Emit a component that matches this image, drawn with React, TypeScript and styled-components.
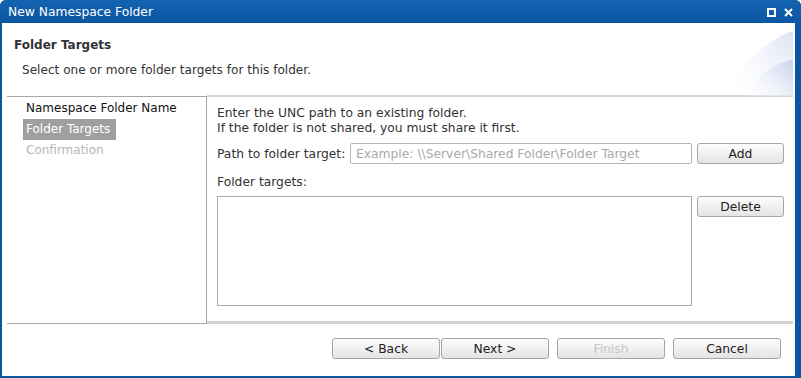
import styled, { createGlobalStyle } from "styled-components";

const GlobalStyle = createGlobalStyle`
    html, body, #root {
        margin: 0;
        padding: 0;
        width: 100%;
        height: 100%;
    }
    body {
        font-family: "DejaVu Sans", Verdana, sans-serif;
        font-size: 12px;
        color: #1e1e1e;
        background: #fff;
    }
`;

interface ButtonProps {
    $disabled?: boolean;
}

function Swoosh() {
    return (
        <SwooshArt width="70" height="72" viewBox="0 0 70 72">
            <defs>
                <linearGradient id="sw1" x1="0" y1="1" x2="1" y2="0">
                    <stop offset="0" stopColor="#ffffff" stopOpacity="0" />
                    <stop offset="1" stopColor="#d9e1f2" />
                </linearGradient>
                <linearGradient id="sw2" x1="0" y1="1" x2="1" y2="0.3">
                    <stop offset="0" stopColor="#ffffff" stopOpacity="0" />
                    <stop offset="1" stopColor="#cfd9ee" />
                </linearGradient>
            </defs>
            <path d="M0 72 C 15 40, 40 15, 70 5 L 70 72 Z" fill="url(#sw1)" />
            <path d="M20 72 C 30 52, 48 38, 70 34 L 70 72 Z" fill="url(#sw2)" />
        </SwooshArt>
    );
}

function App() {
    return (
        <>
            <GlobalStyle />
            <Window>
                <TitleBar>
                    <span>New Namespace Folder</span>
                    <TitleIcons>
                        <svg width="9" height="9" viewBox="0 0 9 9">
                            <rect x="1" y="1" width="7" height="7" fill="none" stroke="#fff" strokeWidth="2" />
                        </svg>
                        <svg width="9" height="9" viewBox="0 0 9 9">
                            <path d="M1 1 L8 8 M8 1 L1 8" stroke="#fff" strokeWidth="2" />
                        </svg>
                    </TitleIcons>
                </TitleBar>
                <Body>
                    <Header>
                        <h3>Folder Targets</h3>
                        <p>Select one or more folder targets for this folder.</p>
                        <Swoosh />
                    </Header>
                    <Main>
                        <Nav>
                            <NavItem>Namespace Folder Name</NavItem>
                            <NavItem $active>Folder Targets</NavItem>
                            <NavItem $muted>Confirmation</NavItem>
                        </Nav>
                        <Content>
                            <Intro>
                                Enter the UNC path to an existing folder.<br />
                                If the folder is not shared, you must share it first.
                            </Intro>
                            <PathRow>
                                <label>Path to folder target:</label>
                                <PathInput placeholder="Example: \\Server\Shared Folder\Folder Target" />
                                <Button>Add</Button>
                            </PathRow>
                            <ListLabel>Folder targets:</ListLabel>
                            <ListRow>
                                <ListBox />
                                <Button>Delete</Button>
                            </ListRow>
                        </Content>
                    </Main>
                    <Footer>
                        <ButtonPair>
                            <WideButton>&lt; Back</WideButton>
                            <WideButton>Next &gt;</WideButton>
                        </ButtonPair>
                        <WideButton $disabled>Finish</WideButton>
                        <WideButton>Cancel</WideButton>
                    </Footer>
                </Body>
            </Window>
        </>
    );
}

const Window = styled.div`
    width: 801px;
    height: 378px;
    box-sizing: border-box;
    display: flex;
    flex-direction: column;
    background: #0b56a2;
    border-radius: 6px 6px 0 0;
    padding: 0 6px 2px 2px;
`;

const TitleBar = styled.div`
    height: 22px;
    flex: none;
    display: flex;
    align-items: center;
    justify-content: space-between;
    padding: 1px 8px 0 8px;
    color: #fff;
    font-size: 12.3px;
    background: linear-gradient(#1463b1, #0b56a2);
    border-radius: 6px 6px 0 0;
    margin: 0 -6px 0 -2px;
`;

const TitleIcons = styled.div`
    display: flex;
    gap: 8px;
    align-items: center;
    svg { display: block; }
`;

const Body = styled.div`
    flex: 1;
    display: flex;
    flex-direction: column;
    background: #fff;
    padding: 0 2px 0 5px;
`;

const Header = styled.div`
    position: relative;
    height: 73px;
    flex: none;
    overflow: hidden;

    h3 {
        margin: 0;
        padding: 15px 0 0 7px;
        font-size: 12px;
        font-weight: bold;
        color: #333;
    }

    p {
        margin: 0;
        padding: 11px 0 0 15px;
        font-size: 12.1px;
        color: #333;
    }
`;

const SwooshArt = styled.svg`
    position: absolute;
    right: -2px;
    top: 2px;
`;

const Main = styled.div`
    display: flex;
    height: 228px;
    flex: none;
`;

const Nav = styled.div`
    width: 200px;
    box-sizing: border-box;
    border-top: 1px solid #a8a8a8;
    border-bottom: 1px solid #a8a8a8;
    border-right: 1px solid #a8a8a8;
    padding-top: 1px;
`;

const NavItem = styled.div<{ $active?: boolean; $muted?: boolean }>`
    display: table;
    margin-left: 16px;
    padding: 0 6px 0 3px;
    height: 21px;
    line-height: 20px;
    font-size: 12px;
    color: ${p => p.$active ? "#fff" : p.$muted ? "#b8b8b8" : "#111"};
    background: ${p => p.$active ? "#9f9f9f" : "transparent"};
`;

const Content = styled.div`
    flex: 1;
    box-sizing: border-box;
    border-top: 2px solid #d2d2d2;
    border-bottom: 3px solid #d2d2d2;
    padding: 9px 9px 0 10px;
    font-size: 12.3px;
    color: #333;
    margin-top: -1px;
`;

const Intro = styled.div`
    line-height: 15px;
`;

const PathRow = styled.div`
    display: flex;
    align-items: center;
    margin-top: 7px;
    height: 21px;

    label {
        white-space: nowrap;
        width: 133px;
    }
`;

const PathInput = styled.input`
    width: 342px;
    height: 21px;
    box-sizing: border-box;
    border: 1px solid #b4b4b4;
    border-radius: 2px;
    padding: 0 5px;
    margin-right: 5px;
    font-family: inherit;
    font-size: 12.3px;
    outline: none;

    &::placeholder {
        color: #a9a9a9;
    }
`;

const ListLabel = styled.div`
    margin-top: 11px;
    height: 21px;
`;

const ListRow = styled.div`
    display: flex;
    align-items: flex-start;
    gap: 5px;
`;

const ListBox = styled.div`
    width: 475px;
    height: 110px;
    box-sizing: border-box;
    border: 1px solid #acacac;
`;

const Button = styled.button<ButtonProps>`
    width: 87px;
    height: 21px;
    box-sizing: border-box;
    border: 1px solid #a6a6a6;
    border-radius: 3px;
    background: linear-gradient(#fdfdfd, #e4e4e4);
    font-family: inherit;
    font-size: 12.3px;
    color: ${p => p.$disabled ? "#c4c4c4" : "#222"};
    padding: 0;
`;

const WideButton = styled(Button)`
    width: 108px;
`;

const ButtonPair = styled.div`
    display: flex;
    gap: 1px;
`;

const Footer = styled.div`
    flex: 1;
    display: flex;
    justify-content: flex-end;
    align-items: flex-start;
    gap: 8px;
    padding: 14px 12px 0 0;
`;

export default App;
